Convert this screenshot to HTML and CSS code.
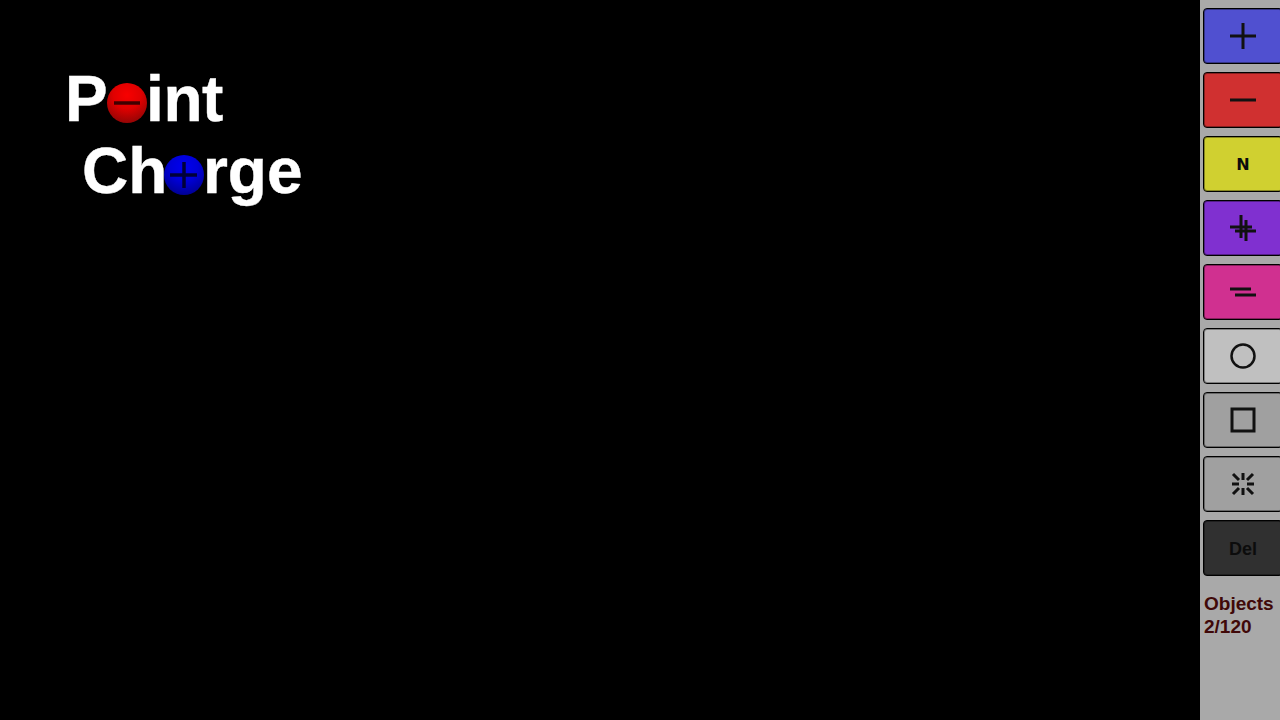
FILE: index.html
```html
<!DOCTYPE html>
<html lang="en">
<head>
  <meta charset="UTF-8">
  <title>Point Charge</title>
  <link rel="stylesheet" href="styles.css">
</head>
<body>
  <div class="app">
    <div class="stage">
      <div class="logo">
        <div class="logo-line logo-point">P<span class="covered">o</span>int<span class="ball ball-neg"><svg viewBox="0 0 40 40"><path d="M7 20H33"/></svg></span></div>
        <div class="logo-line logo-charge">Ch<span class="covered">a</span>rge<span class="ball ball-pos"><svg viewBox="0 0 40 40"><path d="M6 20H33M20 7V33"/></svg></span></div>
      </div>
    </div>

    <div class="sidebar">
      <button class="tool tool-pos"><svg class="icon" viewBox="0 0 28 28"><path d="M1 14H27M14 1V27"/></svg></button>
      <button class="tool tool-neg"><svg class="icon" viewBox="0 0 28 28"><path d="M1 14H27"/></svg></button>
      <button class="tool tool-neutral"><span class="tool-n">N</span></button>
      <button class="tool tool-multi-pos"><svg class="icon" viewBox="0 0 28 28"><path d="M1 13H23M12 1V24M6 17H27M17 6V27"/></svg></button>
      <button class="tool tool-multi-neg"><svg class="icon" viewBox="0 0 28 28"><path d="M1 11H22M6 17H27"/></svg></button>
      <button class="tool tool-circle"><svg class="icon" viewBox="0 0 28 28"><circle cx="14" cy="14" r="11.5"/></svg></button>
      <button class="tool tool-square"><svg class="icon" viewBox="0 0 28 28"><rect x="3" y="3" width="22" height="22"/></svg></button>
      <button class="tool tool-burst"><svg class="icon" viewBox="0 0 28 28"><path d="M14 3V10M14 18V25M3 14H10M18 14H25M4 4L10 10M18 18L24 24M24 4L18 10M10 18L4 24"/></svg></button>
      <button class="tool tool-del"><span class="tool-del-label">Del</span></button>
      <div class="counter">Objects<br>2/120</div>
    </div>
  </div>
</body>
</html>
```

FILE: styles.css
```css
html, body {
  margin: 0;
  height: 100%;
  overflow: hidden;
}

body {
  font-family: "Liberation Sans", Arial, sans-serif;
  background-color: #000;
}

.app {
  display: flex;
  height: 720px;
}

.stage {
  flex: 1;
  background-color: #000;
  padding: 63px 0 0 65px;
}

.logo {
  color: #fff;
  font-size: 64px;
  font-weight: bold;
  line-height: 72px;
  -webkit-text-stroke: 0.4px #fff;
}

.logo-line {
  position: relative;
  width: max-content;
}

.logo-point {
  letter-spacing: -0.4px;
}

.logo-charge {
  margin-left: 17px;
}

/* the balls stand in for these letters */
.covered {
  color: transparent;
  -webkit-text-stroke: 0;
}

.ball {
  position: absolute;
  width: 40px;
  height: 40px;
  border-radius: 50%;
}

.ball svg {
  display: block;
  width: 40px;
  height: 40px;
  fill: none;
  stroke-width: 3.5;
}

.ball-neg {
  left: 42px;
  top: 20px;
  background: radial-gradient(circle at 50% 30%, #f80000 0%, #e00000 40%, #a00404 75%, #700808 100%);
}

.ball-neg svg {
  stroke: #400000;
}

.ball-pos {
  left: 82px;
  top: 20px;
  background: radial-gradient(circle at 50% 30%, #0000f0 0%, #0000d8 40%, #0000a0 75%, #000068 100%);
}

.ball-pos svg {
  stroke: #000038;
}

.sidebar {
  width: 80px;
  flex-shrink: 0;
  box-sizing: border-box;
  background-color: #a9a9a9;
  padding: 8px 0 0 3px;
  overflow: hidden;
}

.tool {
  display: flex;
  align-items: center;
  justify-content: center;
  box-sizing: border-box;
  width: 80px;
  height: 56px;
  margin: 0 0 8px;
  padding: 0;
  border: 1px solid #000;
  border-radius: 4px;
  box-shadow: inset 0 0 0 1px rgba(0, 0, 0, 0.35);
  font-family: inherit;
  font-weight: bold;
  color: #0c0c0c;
}

.icon {
  width: 28px;
  height: 28px;
  fill: none;
  stroke: #111;
  stroke-width: 3;
}

.tool-n {
  font-family: "DejaVu Sans", sans-serif;
  font-size: 16px;
}

.tool-del-label {
  margin-top: 2px;
  font-size: 18px;
}

.tool-pos { background-color: #5050d0; }
.tool-neg { background-color: #d03030; }
.tool-neutral { background-color: #d0d030; }
.tool-multi-pos { background-color: #8030d0; }
.tool-multi-neg { background-color: #d03090; }
.tool-circle { background-color: #c0c0c0; }
.tool-square { background-color: #a0a0a0; }
.tool-burst { background-color: #a0a0a0; }
.tool-del { background-color: #303030; }

.tool-circle .icon { stroke-width: 2.5; }

.counter {
  margin: 16px 0 0 1px;
  font-size: 19px;
  font-weight: bold;
  line-height: 23px;
  color: #400808;
}
```
